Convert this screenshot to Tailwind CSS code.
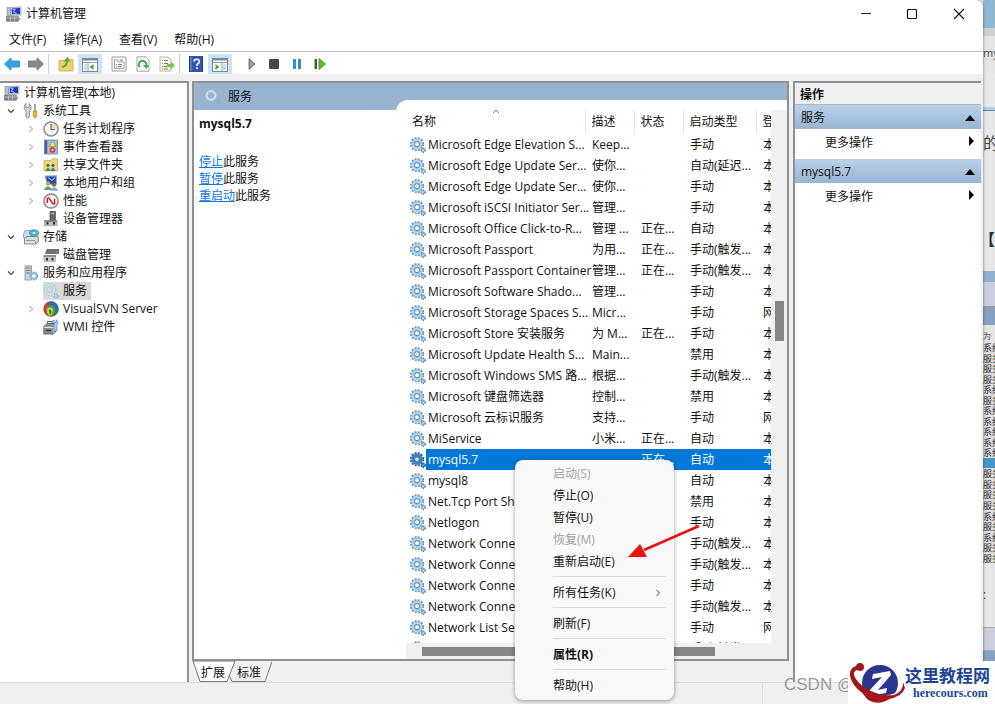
<!DOCTYPE html>
<html lang="zh-CN">
<head>
    <meta charset="UTF-8">
    <meta name="viewport" content="width=device-width, initial-scale=1.0">
    <title>计算机管理</title>
    <script src="https://cdn.jsdelivr.net/npm/@tailwindcss/browser@4"></script>
</head>
<body class="relative flex h-screen overflow-hidden bg-[#e6e6e6] font-['Open_Sans','Noto_Sans_CJK_SC',sans-serif] text-xs text-[#111]">

    <!-- Iconos compartidos -->
    <svg class="hidden">
        <symbol id="i-computer" viewBox="0 0 16 16">
            <path d="M1 1.500H4.500V10H1Z" fill="#b8c0c8" stroke="#7b848d" stroke-width=".6"/>
            <path d="M4.500 1.500L15 .8V9L5 9.500Z" fill="#d3d9e2" stroke="#8d97a4" stroke-width=".7"/>
            <path d="M5.700 2.500L14 2V7.900L6 8.300Z" fill="#1d35c4"/>
            <path d="M6 3L9 3.500L7.500 6L11 8" stroke="#9ab8f5" stroke-width="1.200" fill="none"/>
            <rect x=".5" y="10.500" width="12" height="4.700" fill="#7d848b" stroke="#565c62" stroke-width=".5"/>
            <path d="M4.500 10.500V15M8.500 10.500V15M1 12H12" stroke="#c3c8cd" stroke-width=".8"/>
            <path d="M10 9.500L14.500 13.500" stroke="#9aa3ad" stroke-width="1.500"/>
        </symbol>
        <symbol id="i-tools" viewBox="0 0 16 16">
            <path d="M3 .5V4.500H6V.5L8 3V6L6.500 7.500V14Q4.800 16.500 3 14V7.500L1.300 6V3Z" fill="#d5d8da" stroke="#777b80" stroke-width=".8"/>
            <path d="M12 1V8" stroke="#8a8f94" stroke-width="1.500"/>
            <path d="M10.300 8H13.700V13Q12 17 10.300 13Z" fill="#f4ae22" stroke="#b87408" stroke-width=".6"/>
        </symbol>
        <symbol id="i-clock" viewBox="0 0 16 16">
            <circle cx="8" cy="8" r="7" fill="#f4f5f6" stroke="#8d8f92" stroke-width="1.600"/>
            <path d="M8 8V2A6 6 0 0 1 14 8Z" fill="#f3d9a4"/>
            <path d="M8 3V8.500H12" stroke="#3f6c9c" stroke-width="1.200" fill="none"/>
        </symbol>
        <symbol id="i-event" viewBox="0 0 16 16">
            <rect x="1.500" y="1" width="13" height="14" fill="#a9b9dc" stroke="#6d7fb5" stroke-width=".8"/>
            <path d="M3 1.500V14.500" stroke="#4a5c96" stroke-width="2.500"/>
            <path d="M9.500 1.500L13 7.500H6.500Z" fill="#f5e352" stroke="#5d9f30" stroke-width=".6"/>
            <circle cx="9.500" cy="11" r="2.800" fill="#dc3a38"/>
            <circle cx="9.500" cy="11" r="1" fill="#fff"/>
        </symbol>
        <symbol id="i-share" viewBox="0 0 16 16">
            <path d="M1 3.500H8L9 1.800H14.500V14H1Z" fill="#efd880" stroke="#c4a445" stroke-width=".7"/>
            <circle cx="5" cy="8.300" r="1.600" fill="#3f7d45"/><path d="M2.500 14Q5 7 7.500 14Z" fill="#358e5d"/>
            <circle cx="10" cy="8.300" r="1.600" fill="#3a5fa0"/><path d="M7.700 14Q10 7 12.500 14Z" fill="#3d70b0"/>
        </symbol>
        <symbol id="i-users" viewBox="0 0 16 16">
            <path d="M2.500 1L13.500 .8V9L4 9.500Z" fill="#1f3fbd" stroke="#a1abba" stroke-width="1.200"/>
            <path d="M5 2.500L9 5.500L12 2.500" stroke="#9ab9f2" stroke-width="1.200" fill="none"/>
            <circle cx="5" cy="8.500" r="2.300" fill="#c7a56a"/><path d="M.8 15Q5 7.500 9 15Z" fill="#5ea468"/>
            <circle cx="11" cy="9.500" r="2.200" fill="#8a6040"/><path d="M7 15.700Q11 9 15.300 15.700Z" fill="#7ca9d9"/>
        </symbol>
        <symbol id="i-perf" viewBox="0 0 16 16">
            <circle cx="8" cy="8" r="7.100" fill="#fff" stroke="#878787" stroke-width="1.500"/>
            <circle cx="8" cy="8" r="5.500" fill="none" stroke="#d9d9d9" stroke-width=".6"/>
            <path d="M4.300 10V5.500Q5.500 4 7 6.500L9 9.500Q10.500 12 11.600 10.500V6" stroke="#d61d1d" stroke-width="1.500" fill="none"/>
        </symbol>
        <symbol id="i-device" viewBox="0 0 16 16">
            <rect x="7" y=".5" width="5.500" height="9" fill="#65696e" stroke="#3c3f42" stroke-width=".6"/>
            <path d="M8.500 2.500H11" stroke="#d5d5d5"/>
            <path d="M1.500 9.500H14V14.700H1.500Z" fill="#b9bdc1" stroke="#898d91" stroke-width=".6"/>
            <path d="M1.500 10H14" stroke="#5a5e62"/><rect x="3.500" y="11" width="2" height="2.500" fill="#333"/><rect x="10" y="11" width="2" height="2.500" fill="#333"/>
        </symbol>
        <symbol id="i-storage" viewBox="0 0 16 16">
            <path d="M.5 5L2 1.500H9L10 5V9H.5Z" fill="#c9dde5" stroke="#7d8f98" stroke-width=".7"/>
            <ellipse cx="11" cy="4" rx="4.600" ry="3.300" fill="#4fb1de" stroke="#3481a8" stroke-width=".6"/><ellipse cx="11" cy="4" rx="1.500" ry="1" fill="#fff"/>
            <path d="M1.500 9.500L4 7.500H15.300V13L13 15H1.500Z" fill="#dcdfe1" stroke="#696e73" stroke-width=".8"/>
            <path d="M3 11.500H12" stroke="#8f9498"/><circle cx="12.500" cy="13" r=".8" fill="#45b649"/>
        </symbol>
        <symbol id="i-disk" viewBox="0 0 16 16">
            <path d="M4 2.500H15.700V6.500H2.500Z" fill="#6b7177" stroke="#3f4347" stroke-width=".6"/>
            <circle cx="14" cy="5" r=".8" fill="#5bd35d"/>
            <path d="M1 8.500H12.500V14.500H1Z" fill="#c4c8cc" stroke="#999da1" stroke-width=".6"/>
            <path d="M.5 9H13" stroke="#54585c"/>
            <rect x="3" y="11" width="2" height="2.500" fill="#333"/><rect x="8.500" y="11" width="2" height="2.500" fill="#333"/>
        </symbol>
        <symbol id="i-gear" viewBox="0 0 16 16">
            <circle cx="7" cy="7.200" r="6.200" fill="none" stroke="#6d96b8" stroke-width="1.800" stroke-dasharray="2 1.250"/>
            <circle cx="7" cy="7.200" r="4.100" fill="#a9cfe8" stroke="#8db9d8" stroke-width="3"/>
            <circle cx="7" cy="7.200" r="4.200" fill="none" stroke="#b9daee" stroke-width="1.500"/>
            <circle cx="7" cy="7.200" r="2.500" fill="#fff" stroke="#4f87b5" stroke-width="1"/>
            <circle cx="13.200" cy="13.200" r="1.900" fill="#b5d3e8" stroke="#5f8fb5" stroke-width="1.600" stroke-dasharray="1.300 .7"/>
        </symbol>
        <symbol id="i-gear-selected" viewBox="0 0 16 16">
            <circle cx="7" cy="7.200" r="6.200" fill="none" stroke="#225f95" stroke-width="1.800" stroke-dasharray="2 1.250"/>
            <circle cx="7" cy="7.200" r="4.100" fill="none" stroke="#3a83bd" stroke-width="3.400"/>
            <circle cx="7" cy="7.200" r="2.300" fill="#e9f4fc" stroke="#175a95" stroke-width=".8"/>
            <circle cx="13.200" cy="13.200" r="1.900" fill="#5a9cd0" stroke="#175a95" stroke-width="1.600" stroke-dasharray="1.300 .7"/>
        </symbol>
        <symbol id="i-gear-light" viewBox="0 0 16 16">
            <circle cx="7" cy="6.500" r="5.700" fill="none" stroke="#a3c3da" stroke-width="1.200" stroke-dasharray="1.800 1.180"/>
            <circle cx="7" cy="6.500" r="4.200" fill="none" stroke="#c9e4f3" stroke-width="2"/>
            <circle cx="7" cy="6.500" r="3" fill="none" stroke="#93bbd6" stroke-width=".6"/>
            <circle cx="13" cy="13" r="1.800" fill="none" stroke="#86aed0" stroke-width="1.500" stroke-dasharray="1.200 .7"/>
        </symbol>
        <symbol id="i-apps" viewBox="0 0 16 16">
            <path d="M2 .8H8.500V15H2Z" fill="#cbd3d9" stroke="#81909a" stroke-width=".8"/>
            <path d="M3 3H7.500M3 5.500H7.500M3 8H7.500" stroke="#60707c" stroke-width=".9"/>
            <circle cx="10.800" cy="11" r="3.600" fill="#fff" stroke="#6aa5d3" stroke-width="1.800" stroke-dasharray="1.600 .7"/>
            <circle cx="10.800" cy="11" r="2.500" fill="none" stroke="#8cbbe0" stroke-width="1.300"/>
        </symbol>
        <symbol id="i-svn" viewBox="0 0 16 16">
            <circle cx="8" cy="8" r="7.700" fill="#d9333b"/>
            <path d="M7 .4A7.700 7.700 0 0 1 11 15Q15 6 4.500 3.500Z" fill="#1f6fb8"/>
            <path d="M3 6Q8 2 12 7Q13.500 12 9 15.600Q5 15.500 3.500 12Z" fill="#46a33c"/>
            <path d="M4.500 7.500Q9 5 10 9Q9.500 13 7 15Q3 12 4.500 7.500Z" fill="#e8d33a"/>
            <path d="M5.500 9Q9 7.500 8.500 11.500L7 14.500Z" fill="#2f8f3c"/>
        </symbol>
        <symbol id="i-wmi" viewBox="0 0 16 16">
            <path d="M.8 7.500L4 4.500H13V12L11 15H.8Z" fill="#8d9499" stroke="#4b5156" stroke-width=".8"/>
            <path d="M1 8.500H11V14.500" stroke="#e2e5e7" fill="none"/><path d="M3 11.500H8" stroke="#2f3438" stroke-width="1.500"/>
            <path d="M4.500 4.500V2.500H9V4.500" stroke="#555b60" fill="none"/>
            <path d="M11 .8V3.500H13V.8L15 2.500L14 5V12H11V5L10 2.500Z" fill="#a5cff0" stroke="#3c77aa" stroke-width=".6"/>
        </symbol>
        <symbol id="i-down" viewBox="0 0 8 8"><path d="M1 2.500L4 5.500L7 2.500" stroke="#404040" stroke-width="1.100" fill="none"/></symbol>
        <symbol id="i-right" viewBox="0 0 8 8"><path d="M2.500 1L5.500 4L2.500 7" stroke="#8c8c8c" stroke-width="1" fill="none"/></symbol>
    </svg>

    <!-- Ventana principal -->
    <main class="relative z-10 flex min-w-0 flex-1 flex-col rounded-tr-lg bg-[#f0f0f0] shadow-[0_0_3px_#0008]">
        <header class="flex h-[27px] shrink-0 items-center rounded-tr-lg bg-white pl-1.5">
            <svg class="size-4"><use href="#i-computer"/></svg>
            <h1 class="ml-1 flex-1">计算机管理</h1>
            <button aria-label="最小化" class="flex h-full w-[46px] items-center justify-center"><svg class="size-3" viewBox="0 0 12 12"><path d="M1 5.500H11" stroke="#222"/></svg></button>
            <button aria-label="最大化" class="flex h-full w-[46px] items-center justify-center"><svg class="size-3" viewBox="0 0 12 12"><rect x="1.500" y="1.500" width="9" height="9" rx="1" fill="none" stroke="#111" stroke-width="1.200"/></svg></button>
            <button aria-label="关闭" class="flex h-full w-[48px] items-center justify-center"><svg class="size-3" viewBox="0 0 12 12"><path d="M1 1L11 11M11 1L1 11" stroke="#111" stroke-width="1.100"/></svg></button>
        </header>
        <nav class="flex h-[25px] shrink-0 items-center gap-[17px] border-b border-[#bdbdbd] bg-white px-[9px] pt-0.5">
            <button>文件(F)</button>
            <button>操作(A)</button>
            <button>查看(V)</button>
            <button>帮助(H)</button>
        </nav>

        <div class="flex h-[22px] shrink-0 items-center bg-white pt-px">
            <button aria-label="后退" class="flex w-6 justify-center"><svg class="size-4" viewBox="0 0 16 16"><path d="M.5 8L7 1.800V5H15.500V11H7V14.200Z" fill="#35a3dc" stroke="#2383b8" stroke-width=".8"/></svg></button>
            <button aria-label="前进" class="flex w-6 justify-center"><svg class="size-4" viewBox="0 0 16 16"><path d="M15.500 8L9 1.800V5H.5V11H9V14.200Z" fill="#8b8b8b" stroke="#6c6c6c" stroke-width=".8"/></svg></button>
            <span class="mr-[5px] h-5 w-px bg-[#d0d0d0]"></span>
            <button aria-label="向上" class="flex w-6 justify-center"><svg class="size-4" viewBox="0 0 16 16"><path d="M1 4.500H6L7 3.500H15V15H1Z" fill="#f0cf6d" stroke="#cfa848" stroke-width=".8"/><path d="M4 11Q9 10 9 5" stroke="#4eb32c" stroke-width="2" fill="none"/><path d="M5.500 5.500L9.500 .8L12.500 5.500Z" fill="#4eb32c"/></svg></button>
            <button aria-label="显示树" class="flex h-5 w-6 items-center justify-center bg-[#cce4f7]"><svg class="size-4" viewBox="0 0 16 16"><rect x=".5" y="2.500" width="15" height="13" fill="#fff" stroke="#818790"/><path d="M1 3.500H15" stroke="#818790" stroke-width="2"/><path d="M1 6.500H15M6 6.500V15" stroke="#949aa3"/><path d="M2 9H5M2 11H5M2 13H5" stroke="#a5b5c5"/><path d="M11.500 8V14L7.500 11Z" fill="#3fa843"/></svg></button>
            <button aria-label="属性" class="ml-[5px] flex w-6 justify-center"><svg class="size-4" viewBox="0 0 16 16"><path d="M1 1H15V15H1Z" fill="#f4f6f8" stroke="#9aa2aa"/><path d="M3.500 4H7V6H13V12.500H3.500Z" fill="#fff" stroke="#9ba3ab"/><path d="M5 8.500H6M7 8.500H11M5 10.500H6M7 10.500H11M9 4H12" stroke="#7a8590"/></svg></button>
            <button aria-label="刷新" class="flex w-6 justify-center"><svg class="size-4" viewBox="0 0 16 16"><path d="M2 .8H11L14 4V15.200H2Z" fill="#fbfbfb" stroke="#a2a6aa"/><path d="M4.800 11A3.700 3.700 0 1 1 11.200 9" stroke="#3fae49" stroke-width="1.900" fill="none"/><path d="M8 9H14L11.500 13Z" fill="#3fae49"/></svg></button>
            <button aria-label="导出列表" class="flex w-6 justify-center"><svg class="size-4" viewBox="0 0 16 16"><path d="M1 1H9L12 4V15H1Z" fill="#fdfbe9" stroke="#b9b6a0"/><path d="M3 4.500H4M5 4.500H9M3 7.500H4M5 7.500H9M3 10.500H4M5 10.500H8M3 13H4M5 13H9" stroke="#77797c"/><path d="M8 8H11.500V5.500L16 9.500L11.500 13.500V11H8Z" fill="#6bc94a"/></svg></button>
            <span class="mr-1 h-5 w-px bg-[#d0d0d0]"></span>
            <button aria-label="帮助" class="flex w-6 justify-center"><svg class="size-4" viewBox="0 0 16 16"><rect x="1.500" y=".7" width="13" height="14.600" fill="#3256b5" stroke="#1d3679"/><path d="M3 1V15" stroke="#6e85cf" stroke-width="1.500"/><path d="M6 5.500Q6 3.200 8.700 3.200T11.300 5.500Q11.300 7 9 8.500V10M9 11.300V13" stroke="#fff" stroke-width="1.600" fill="none"/></svg></button>
            <button aria-label="显示操作窗格" class="flex h-5 w-6 items-center justify-center bg-[#cce4f7]"><svg class="size-4" viewBox="0 0 16 16"><rect x=".5" y="2.500" width="15" height="13" fill="#fff" stroke="#818790"/><path d="M1 3.500H15" stroke="#818790" stroke-width="2"/><path d="M1 6.500H15M10 6.500V15" stroke="#949aa3"/><path d="M11 9H14M11 11H14M11 13H14" stroke="#a5b5c5"/><path d="M3.500 8V14L7.500 11Z" fill="#3fa843"/></svg></button>
            <button aria-label="启动服务" class="ml-2 flex w-[23px] justify-center"><svg class="size-4" viewBox="0 0 16 16"><path d="M5 2.500L11 8L5 13.500Z" fill="#9b9b9b" stroke="#777"/></svg></button>
            <button aria-label="停止服务" class="flex w-[22px] justify-center"><svg class="size-4" viewBox="0 0 16 16"><rect x="3" y="3" width="10" height="10" rx="1" fill="#444"/></svg></button>
            <button aria-label="暂停服务" class="flex w-[23px] justify-center"><svg class="size-4" viewBox="0 0 16 16"><path d="M4 3H7V13H4ZM9 3H12V13H9Z" fill="#2b8fd0"/></svg></button>
            <button aria-label="重新启动服务" class="flex w-[23px] justify-center"><svg class="size-4" viewBox="0 0 16 16"><path d="M2.500 3H5V13H2.500Z" fill="#555"/><path d="M7 2.500L13.500 8L7 13.500Z" fill="#52c421" stroke="#2f9a1b" stroke-width=".8"/></svg></button>
        </div>

        <div class="flex min-h-0 flex-1 pt-[7px]">
            <!-- Árbol de la consola -->
            <ul class="w-[189px] shrink-0 border-t-2 border-r-2 border-[#909090] bg-white pt-px leading-[18px]" id="tree"></ul>

            <!-- Panel central -->
            <section class="ml-[3px] flex min-w-0 flex-1 flex-col">
                <div class="flex min-h-0 flex-1 border-2 border-[#909090] bg-[#99b4d1]">
                    <div class="flex w-[202px] shrink-0 flex-col">
                        <h2 class="flex h-[27px] shrink-0 items-center gap-2 pt-px pl-2.5"><svg class="size-4"><use href="#i-gear-light"/></svg>服务</h2>
                        <div class="flex-1 bg-white pt-[5px] pl-[5px]">
                            <h3 class="font-bold leading-[18px]">mysql5.7</h3>
                            <div class="mt-5 leading-[17px]">
                                <p><a href="#" class="text-[#0a78e6] underline">停止</a>此服务</p>
                                <p><a href="#" class="text-[#0a78e6] underline">暂停</a>此服务</p>
                                <p><a href="#" class="text-[#0a78e6] underline">重启动</a>此服务</p>
                            </div>
                        </div>
                    </div>
                    <div class="mt-[17px] flex min-w-0 flex-1 flex-col rounded-tl-xl bg-white pt-2.5">
                        <div class="flex min-h-0 flex-1 pl-3">
                            <div class="min-w-0 flex-1 overflow-hidden">
                                <table class="w-full table-fixed">
                                    <thead>
                                        <tr class="h-[24px] text-left">
                                            <th class="relative pl-1 font-normal">名称<svg class="absolute -top-0.5 left-[84px] size-2" viewBox="0 0 8 8"><path d="M1 5L4 2L7 5" stroke="#888" fill="none"/></svg></th>
                                            <th class="w-[49px] border-l border-[#e5e5e5] pl-1.5 font-normal">描述</th>
                                            <th class="w-[49px] border-l border-[#e5e5e5] pl-1.5 font-normal">状态</th>
                                            <th class="w-[73px] border-l border-[#e5e5e5] pl-1.5 font-normal">启动类型</th>
                                            <th class="w-[15px] overflow-hidden border-l border-[#e5e5e5] pl-1.5 font-normal">登</th>
                                        </tr>
                                    </thead>
                                    <tbody id="services"></tbody>
                                </table>
                            </div>
                            <div class="flex w-4 shrink-0 justify-center bg-[#f0f0f0]"><div class="mt-[191px] h-10 w-[9px] bg-[#858585]"></div></div>
                        </div>
                        <div class="ml-2.5 flex h-4 shrink-0 items-center bg-[#f0f0f0]"><div class="ml-4 h-[9px] w-[293px] bg-[#858585]"></div></div>
                    </div>
                </div>
                <div class="relative flex h-[21px] shrink-0 pt-0.5">
                    <svg class="absolute top-0 left-0 h-[21px] w-20" viewBox="0 0 80 21"><path d="M40 20.500H73L80 .5" fill="none" stroke="#777"/><path d="M1 0L8 20.500H35L43 0Z" fill="#fff" stroke="#777"/><path d="M37 14L40 20.500" stroke="#777"/></svg>
                    <button class="relative ml-[9px]">扩展</button>
                    <button class="relative ml-3">标准</button>
                </div>
            </section>

            <!-- Panel de acciones -->
            <aside class="mr-0.5 ml-1 w-[188px] shrink-0 border-t-2 border-l-2 border-[#909090] bg-white">
                <h2 class="h-[22px] border-b border-[#a8b8c8] bg-[#f0f0f0] pl-[5px] font-bold leading-6">操作</h2>
                <button class="flex h-6 w-full items-center justify-between bg-linear-to-b from-[#b9d1ea] to-[#99b4d1] px-1.5 pt-0.5">服务<svg class="h-2 w-2.5" viewBox="0 0 10 8"><path d="M0 7L5 1L10 7Z"/></svg></button>
                <button class="flex h-[30px] w-full items-start justify-between pt-1.5 pr-1.5 pl-[30px]">更多操作<svg class="mt-px h-2.5 w-2" viewBox="0 0 8 10"><path d="M2 0L7 5L2 10Z"/></svg></button>
                <button class="flex h-6 w-full items-center justify-between bg-linear-to-b from-[#b9d1ea] to-[#99b4d1] px-1.5 pt-0.5">mysql5.7<svg class="h-2 w-2.5" viewBox="0 0 10 8"><path d="M0 7L5 1L10 7Z"/></svg></button>
                <button class="flex h-[30px] w-full items-start justify-between pt-1.5 pr-1.5 pl-[30px]">更多操作<svg class="mt-px h-2.5 w-2" viewBox="0 0 8 10"><path d="M2 0L7 5L2 10Z"/></svg></button>
            </aside>
        </div>
        <footer class="h-[22px] shrink-0 border-t border-[#dcdcdc]"><div class="ml-[762px] h-full w-px bg-[#dedede]"></div></footer>
    </main>

    <!-- Ventana que queda detrás -->
    <div class="flex w-3 shrink-0 flex-col overflow-hidden whitespace-nowrap text-[#444]">
        <div class="h-7 shrink-0 bg-[#8fb8cf]"></div>
        <div class="h-2 shrink-0 bg-[#cfcfcf]"></div>
        <div class="h-[37px] shrink-0 bg-[#e4e4e4] text-[11px] leading-[34px]">my</div>
        <div class="h-[34px] shrink-0 bg-[#e9e9e9]"></div>
        <div class="h-1 shrink-0 border-b border-[#5d87b0] bg-[#b4cbe0]"></div>
        <div class="h-16 shrink-0 text-base leading-[64px]">的</div>
        <div class="h-24 shrink-0 text-base leading-[128px] font-bold text-[#1c3448]"><span class="-ml-1">【</span></div>
        <div class="h-[11px] shrink-0 bg-[#8fb2cc]"></div>
        <div class="h-[26px] shrink-0 border-b-2 border-[#999] bg-[#cdcde0]"></div>
        <div class="h-[17px] shrink-0 bg-[#84a1c2]"></div>
        <div class="h-[17px] shrink-0 pt-1 text-[8px] leading-[14px]">为</div>
        <div id="behind" class="flex h-[221px] shrink-0 flex-col bg-[#dcdcdc] text-[9px] text-[#333]"></div>
        <div class="h-[64px] shrink-0 leading-[64px]">:</div>
        <div class="h-6 shrink-0 border-y border-[#aaa] bg-[#cdcde0]"></div>
        <div class="h-[10px] shrink-0 bg-[#84a1c2]"></div>
    </div>

    <!-- Menú contextual -->
    <div class="absolute top-[460px] left-[515px] z-20 w-[159px] rounded-lg bg-[#f9f9f9] py-[3px] pr-2 pl-[38px] leading-[22px] shadow-[0_1px_4px_#0006]">
        <button disabled class="block h-[22px] w-full text-left text-[#a3a3a3]">启动(S)</button>
        <button class="block h-[22px] w-full text-left">停止(O)</button>
        <button class="block h-[22px] w-full text-left">暂停(U)</button>
        <button disabled class="block h-[22px] w-full text-left text-[#a3a3a3]">恢复(M)</button>
        <button class="block h-[22px] w-full text-left">重新启动(E)</button>
        <hr class="mt-[3px] mb-[5px] border-[#dedede]">
        <button class="flex h-[22px] w-full items-center justify-between pr-1">所有任务(K)<svg class="size-2" viewBox="0 0 8 8"><path d="M2.500 1L5.500 4L2.500 7" stroke="#444" fill="none"/></svg></button>
        <hr class="mt-[3px] mb-[5px] border-[#dedede]">
        <button class="block h-[22px] w-full text-left">刷新(F)</button>
        <hr class="mt-[3px] mb-[5px] border-[#dedede]">
        <button class="block h-[22px] w-full text-left font-bold">属性(R)</button>
        <hr class="mt-[3px] mb-[5px] border-[#dedede]">
        <button class="block h-[22px] w-full text-left">帮助(H)</button>
    </div>

    <!-- Flecha roja -->
    <svg class="absolute top-[522px] left-[626px] z-30 h-10 w-20" viewBox="0 0 80 40"><path d="M73 4L18 28" stroke="#e81010" stroke-width="2.500"/><path d="M2 35L14 22L21 35Z" fill="#f01010"/></svg>

    <!-- Marcas de agua -->
    <span class="absolute top-[673px] left-[784px] z-20 font-['Liberation_Sans',sans-serif] text-[17px] leading-6 text-[#9a9a9a]">CSDN @</span>
    <div class="absolute right-0 bottom-0 z-30 flex h-[43px] w-[147px] items-center bg-white">
        <svg class="h-[43px] w-[57px] shrink-0" viewBox="0 0 57 43">
            <circle cx="32" cy="22" r="18" fill="#29368d"/>
            <path d="M25 13L42 10L43 14L30 29L39 27L38 32L20 35L20 31L34 16L24 18Z" fill="#fff"/>
            <path d="M6 20Q14 33 34 35Q48 36 56 26" stroke="#fff" stroke-width="1.500" fill="none"/>
            <path d="M13 4Q1 5 2 15C6 31 22 38 40 38Q54 36 57 27L55 21Q56 30 46 34C30 36 10 26 6 14Q5 9 12 8Z" fill="#a3171c"/>
            <circle cx="12" cy="6" r="4" fill="#a3171c"/>
            <path d="M12 29Q24 38 43 37Q30 46 19 38Z" fill="#a3171c"/>
        </svg>
        <div class="whitespace-nowrap font-bold text-[#1d4596]">
            <p class="font-['Noto_Sans_CJK_SC',sans-serif] text-[17px] leading-5">这里教程网</p>
            <p class="pl-2 font-['Liberation_Serif',serif] text-xs leading-4">herecours.com</p>
        </div>
    </div>

    <script>
        // [nivel, flecha, icono, texto]
        const tree = [
            [0, "", "computer", "计算机管理(本地)"],
            [1, "down", "tools", "系统工具"],
            [2, "right", "clock", "任务计划程序"],
            [2, "right", "event", "事件查看器"],
            [2, "right", "share", "共享文件夹"],
            [2, "right", "users", "本地用户和组"],
            [2, "right", "perf", "性能"],
            [2, "", "device", "设备管理器"],
            [1, "down", "storage", "存储"],
            [2, "", "disk", "磁盘管理"],
            [1, "down", "apps", "服务和应用程序"],
            [2, "", "gear-light", "服务"],
            [2, "right", "svn", "VisualSVN Server"],
            [2, "", "wmi", "WMI 控件"],
        ];
        const indent = ["pl-1", "pl-[7px]", "pl-[27px]"];

        document.getElementById("tree").innerHTML = tree.map(([level, arrow, icon, text]) => `
            <li class="flex h-[18px] items-center ${indent[level]}">
                ${level ? `<svg class="mr-2 size-2 shrink-0">${arrow ? `<use href="#i-${arrow}"/>` : ""}</svg>` : ""}
                <span class="flex h-[18px] items-center gap-1 pr-1 ${text === "服务" ? "bg-[#d9d9d9]" : ""}"><svg class="size-4"><use href="#i-${icon}"/></svg>${text}</span>
            </li>`).join("");

        const services = [
            ["Microsoft Edge Elevation S...", "Keep...", "", "手动", "本"],
            ["Microsoft Edge Update Ser...", "使你...", "", "自动(延迟...", "本"],
            ["Microsoft Edge Update Ser...", "使你...", "", "手动", "本"],
            ["Microsoft iSCSI Initiator Ser...", "管理...", "", "手动", "本"],
            ["Microsoft Office Click-to-R...", "管理 ...", "正在...", "自动", "本"],
            ["Microsoft Passport", "为用...", "正在...", "手动(触发...", "本"],
            ["Microsoft Passport Container", "管理...", "正在...", "手动(触发...", "本"],
            ["Microsoft Software Shado...", "管理...", "", "手动", "本"],
            ["Microsoft Storage Spaces S...", "Micr...", "", "手动", "网"],
            ["Microsoft Store 安装服务", "为 M...", "正在...", "手动", "本"],
            ["Microsoft Update Health S...", "Main...", "", "禁用", "本"],
            ["Microsoft Windows SMS 路...", "根据...", "", "手动(触发...", "本"],
            ["Microsoft 键盘筛选器", "控制...", "", "禁用", "本"],
            ["Microsoft 云标识服务", "支持...", "", "手动", "网"],
            ["MiService", "小米...", "正在...", "自动", "本"],
            ["mysql5.7", "", "正在...", "自动", "本"],
            ["mysql8", "", "", "自动", "本"],
            ["Net.Tcp Port Sha...", "", "", "禁用", "本"],
            ["Netlogon", "", "", "手动", "本"],
            ["Network Connec...", "", "", "手动(触发...", "本"],
            ["Network Connec...", "", "", "手动(触发...", "本"],
            ["Network Connec...", "", "", "手动", "本"],
            ["Network Connec...", "", "", "手动(触发...", "本"],
            ["Network List Serv...", "", "", "手动", "网"],
            ["", "", "", "手动(触发...", "网"],
        ];

        document.getElementById("services").innerHTML = services.map(([name, desc, state, start, login]) => {
            const selected = name === "mysql5.7";
            return `
            <tr class="h-[21px] whitespace-nowrap leading-[21px] ${selected ? "text-white" : ""}">
                <td><div class="flex items-center pl-0.5"><svg class="size-4 shrink-0"><use href="#i-gear${selected ? "-selected" : ""}"/></svg><span class="min-w-0 flex-1 pl-0.5 ${selected ? "bg-[#0078d7]" : ""}">${name}</span></div></td>
                <td class="overflow-hidden pl-[7px] ${selected ? "bg-[#0078d7]" : ""}">${desc}</td>
                <td class="overflow-hidden pl-[7px] ${selected ? "bg-[#0078d7]" : ""}">${state}</td>
                <td class="overflow-hidden pl-[7px] ${selected ? "bg-[#0078d7]" : ""}">${start}</td>
                <td class="overflow-hidden pl-[7px] ${selected ? "bg-[#0078d7]" : ""}">${login}</td>
            </tr>`;
        }).join("");

        const behind = ["系统", "服务", "服务", "服务", "系统", "服务", "系统", "系统", "系统", "系统", "系统", "", "服务", "服务", "服务", "服务", "系统", "服务", "系统", "服务", "服务"];
        document.getElementById("behind").innerHTML = behind.map((text) =>
            `<div class="min-h-0 flex-1 leading-[11px] ${text ? "" : "bg-[#4795c9]"}">${text}</div>`).join("");
    </script>

</body>
</html>
